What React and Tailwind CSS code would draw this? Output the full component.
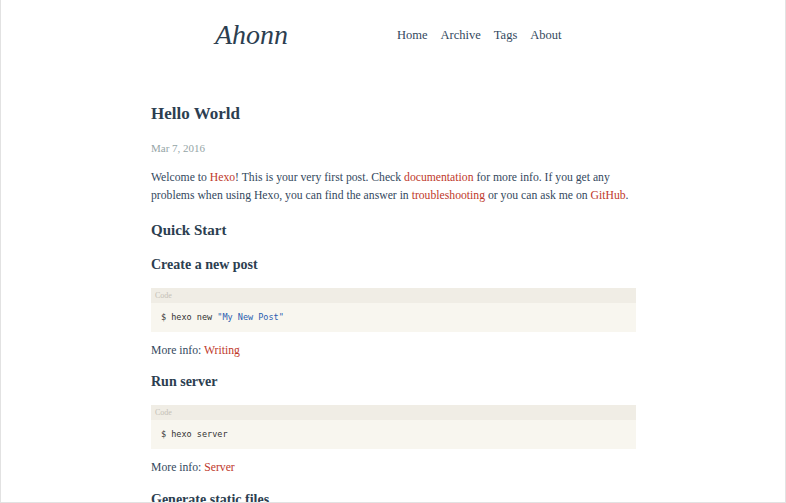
import React from 'react';

const serif = { fontFamily: '"Liberation Serif", "DejaVu Serif", serif' };

const CodeBlock = ({ children }) => (
  <div className="bg-[#f8f6ef] w-[485px]">
    <div className="bg-[#f0ede5] h-[15px] px-[4px] text-[8px] leading-[15px] text-[#c4c0b6]" style={serif}>
      Code
    </div>
    <div className="px-[10px] py-[8px] text-[8.5px] leading-[13px] text-[#333]" style={{ fontFamily: '"DejaVu Sans Mono", monospace' }}>
      {children}
    </div>
  </div>
);

const App = () => {
  return (
    <div className="w-[786px] h-[503px] overflow-hidden bg-white border-l border-r border-b border-[#e2e2e2] text-[#34495e]" style={serif}>
      {/* header */}
      <div className="flex items-center h-[70px] pl-[214px]">
        <div className="text-[28px] italic text-[#2c3e50] w-[182px]">Ahonn</div>
        <nav className="flex gap-[13px] text-[12.5px] text-[#34495e]">
          <span>Home</span>
          <span>Archive</span>
          <span>Tags</span>
          <span>About</span>
        </nav>
      </div>

      {/* post */}
      <div className="ml-[150px] w-[485px] pt-[33px]">
        <h1 className="text-[17px] font-bold leading-[22px] text-[#2c3e50]">Hello World</h1>
        <div className="mt-[15px] text-[11px] leading-[16px] text-[#95a5a6]">Mar 7, 2016</div>
        <p className="mt-[13px] text-[11.7px] leading-[18px]">
          Welcome to <span className="text-[#c0392b]">Hexo</span>! This is your very first post. Check{' '}
          <span className="text-[#c0392b]">documentation</span> for more info. If you get any problems when using Hexo, you can find the answer in{' '}
          <span className="text-[#c0392b]">troubleshooting</span> or you can ask me on{' '}
          <span className="text-[#c0392b]">GitHub</span>.
        </p>
        <h2 className="mt-[15px] text-[15px] font-bold leading-[20px] text-[#2c3e50]">Quick Start</h2>
        <h3 className="mt-[16px] text-[14px] font-bold leading-[18px] text-[#2c3e50]">Create a new post</h3>
        <div className="mt-[14px]">
          <CodeBlock>
            $ hexo new <span className="text-[#2a5db0]">"My New Post"</span>
          </CodeBlock>
        </div>
        <p className="mt-[10px] text-[11.7px] leading-[18px]">
          More info: <span className="text-[#c0392b]">Writing</span>
        </p>
        <h3 className="mt-[13px] text-[14px] font-bold leading-[18px] text-[#2c3e50]">Run server</h3>
        <div className="mt-[14px]">
          <CodeBlock>$ hexo server</CodeBlock>
        </div>
        <p className="mt-[10px] text-[11.7px] leading-[18px]">
          More info: <span className="text-[#c0392b]">Server</span>
        </p>
        <h3 className="mt-[14px] text-[14px] font-bold leading-[18px] text-[#2c3e50]">Generate static files</h3>
      </div>
    </div>
  );
};

export default App;
